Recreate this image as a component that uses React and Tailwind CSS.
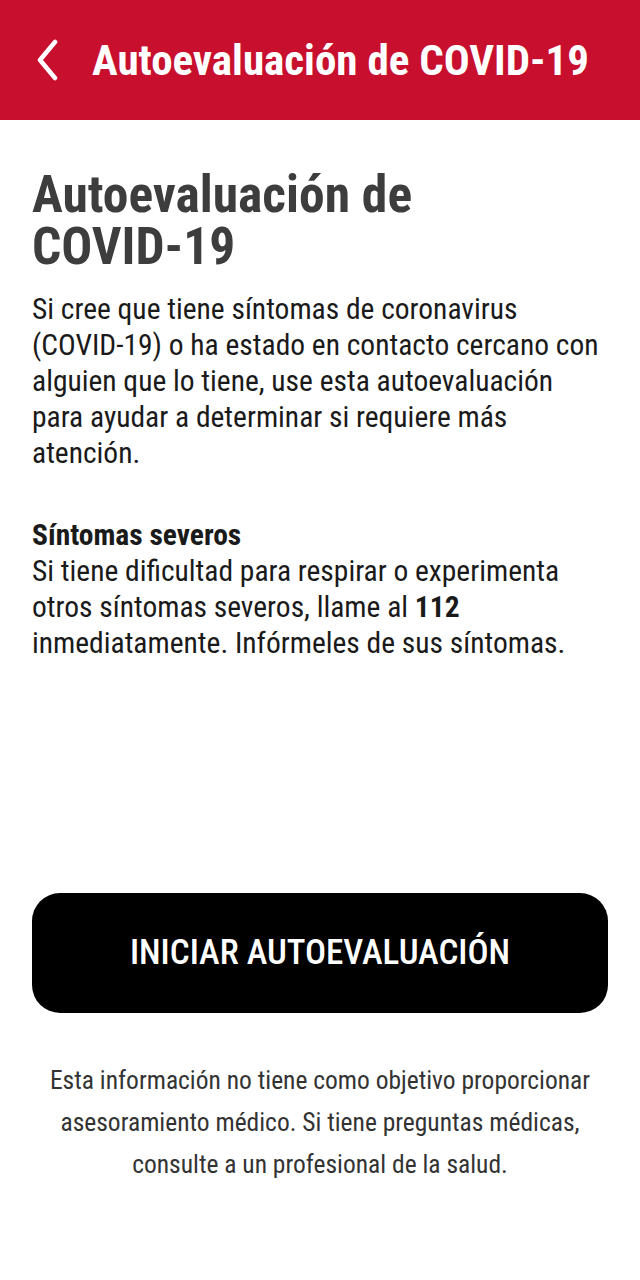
function BackIcon() {
  return (
    <svg width="24" height="42" viewBox="0 0 24 42" fill="none">
      <path
        d="M19 3 L4 21 L19 39"
        stroke="white"
        strokeWidth="4.5"
        strokeLinecap="round"
        strokeLinejoin="round"
      />
    </svg>
  );
}

function App() {
  return (
    <div className="min-h-[1280px] bg-white flex flex-col font-['Roboto_Condensed','Roboto',sans-serif]">
      <header className="h-[120px] bg-[#c8102e] flex items-center pl-[36px] gap-[32px]">
        <BackIcon />
        <h1 className="text-white text-[43px] leading-none font-bold">
          Autoevaluación de COVID-19
        </h1>
      </header>

      <main className="flex flex-col px-[32px]">
        <h2 className="mt-[49px] text-[#3d3d3d] text-[51.5px] leading-[52px] font-bold">
          Autoevaluación de
          <br />
          COVID-19
        </h2>
        <p className="mt-[18px] text-[#1a1a1a] text-[29.5px] leading-[36px]">
          Si cree que tiene síntomas de coronavirus (COVID-19) o ha estado en contacto cercano con
          alguien que lo tiene, use esta autoevaluación para ayudar a determinar si requiere más
          atención.
        </p>

        <div className="mt-[46px] text-[#1a1a1a] text-[29.5px] leading-[36px]">
          <h3 className="font-bold">Síntomas severos</h3>
          <p>
            Si tiene dificultad para respirar o experimenta otros síntomas severos, llame al{" "}
            <span className="font-bold">112</span> inmediatamente. Infórmeles de sus síntomas.
          </p>
        </div>

        <button className="mt-[232px] h-[120px] w-full rounded-[28px] bg-black text-white text-[35px] font-medium">
          INICIAR AUTOEVALUACIÓN
        </button>

        <p className="mt-[46px] text-center text-[#333333] text-[25.5px] leading-[42px] px-[4px]">
          Esta información no tiene como objetivo proporcionar asesoramiento médico. Si tiene
          preguntas médicas, consulte a un profesional de la salud.
        </p>
      </main>
    </div>
  );
}

export default App;
